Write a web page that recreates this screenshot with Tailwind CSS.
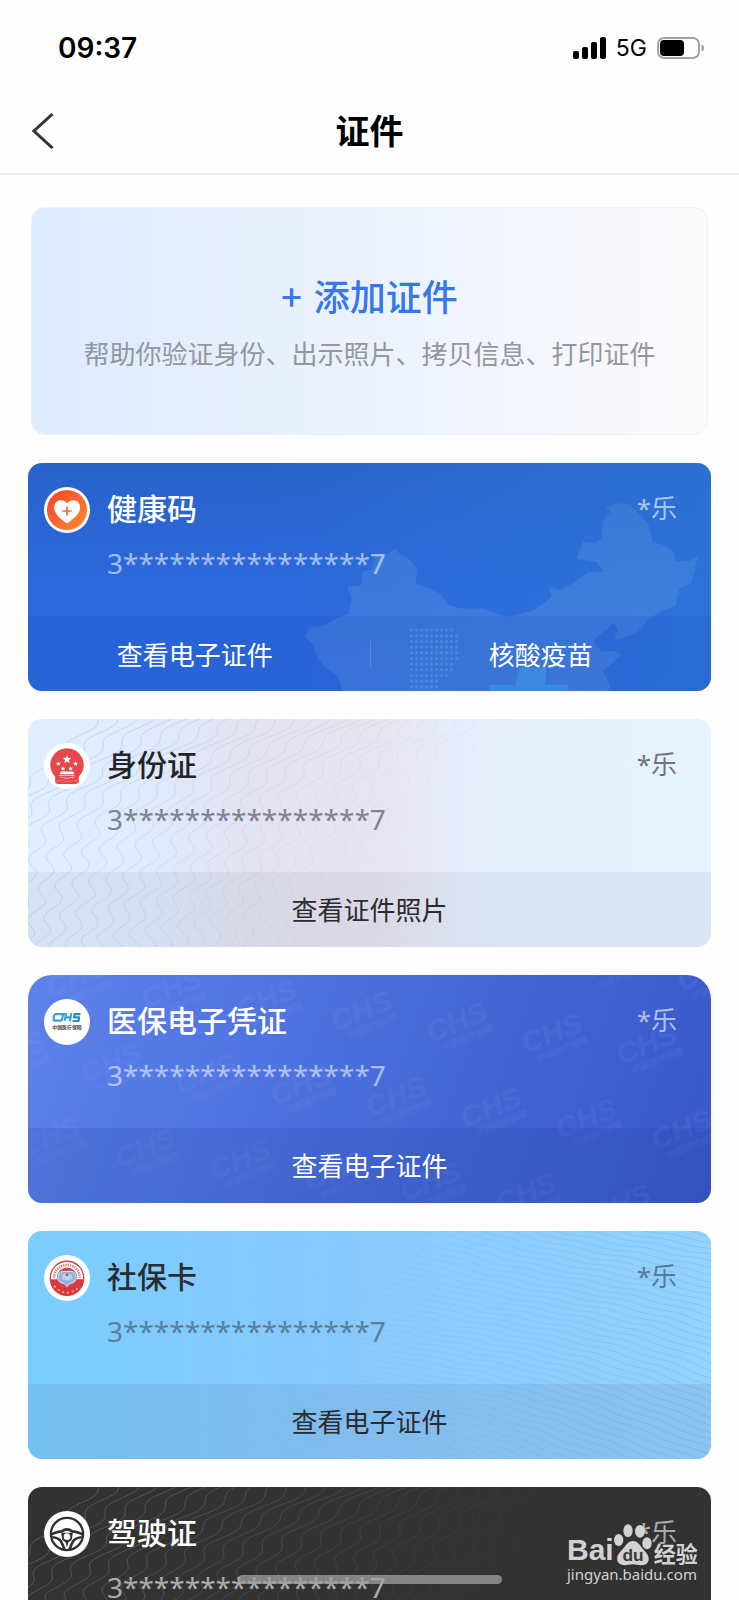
<!DOCTYPE html>
<html lang="zh-CN">
<head>
<meta charset="utf-8">
<meta name="viewport" content="width=device-width, initial-scale=1">
<title>证件</title>
<script src="https://cdn.jsdelivr.net/npm/@tailwindcss/browser@4"></script>
</head>
<body class="bg-white font-['Noto_Sans_CJK_SC',sans-serif]">
<div class="relative flex h-screen flex-col overflow-hidden bg-[#fefefe]">

  <!-- Status bar -->
  <div class="flex h-[89px] shrink-0 items-center justify-between pt-1.5 pr-[34px] pl-[58px] text-black">
    <time class="font-['Inter',sans-serif] text-[28px] leading-8 font-semibold">09:37</time>
    <div class="flex items-center gap-2.5">
      <svg class="h-[22px] w-[33px]" viewBox="0 0 33 22" aria-label="信号"><rect x="0" y="14" width="6" height="8" rx="2"/><rect x="9" y="10" width="6" height="12" rx="2"/><rect x="18" y="5" width="6" height="17" rx="2"/><rect x="27" y="0" width="6" height="22" rx="2"/></svg>
      <span class="font-['Inter',sans-serif] text-[23px] leading-8">5G</span>
      <svg class="h-[22px] w-12" viewBox="0 0 48 22" aria-label="电量"><rect x="1" y="1" width="41" height="20" rx="6" fill="none" stroke="#a3a3a3" stroke-width="2"/><rect x="3" y="3" width="24" height="16" rx="4"/><path d="M44.500 7.500c3.500.5 3.500 6.500 0 7z" fill="#a3a3a3"/></svg>
    </div>
  </div>

  <!-- Title bar -->
  <header class="grid h-[86px] shrink-0 grid-cols-[1fr_auto_1fr] items-center border-b-2 border-[#ebebeb] px-8">
    <button type="button" aria-label="返回" class="w-[22px]"><svg class="h-9 w-[22px]" viewBox="0 0 22 36" fill="none" stroke="#333" stroke-width="3"><path d="M20.500 1 1.900 18l18.600 17"/></svg></button>
    <h1 class="pb-0.5 text-[34px] leading-12 font-bold text-black">证件</h1>
    <span></span>
  </header>

  <main class="flex min-h-0 flex-1 flex-col gap-7 overflow-hidden px-7 pt-8">
    <button type="button" class="mx-[3px] flex h-[228px] shrink-0 flex-col items-center justify-center gap-4 rounded-[14px] border border-[#edf0fb] bg-linear-to-r from-[#dcebfe] via-[#ecf2fd] to-[#fcfafb]">
      <span class="text-[36px] leading-12 font-medium text-[#3478ea]"><span class="mr-1">+</span> 添加证件</span>
      <span class="text-[26px] leading-9 text-[#94979d]">帮助你验证身份、出示照片、拷贝信息、打印证件</span>
    </button>

    <!-- Health code -->
    <article class="relative isolate flex shrink-0 flex-col overflow-hidden rounded-[14px] bg-linear-to-b from-[#2962ca] via-[#2b68da] to-[#2b69e0] text-white">
      <svg class="absolute inset-0 -z-10 h-full w-full" viewBox="0 0 683 228" preserveAspectRatio="xMaxYMin slice" aria-hidden="true">
        <defs>
          <linearGradient id="hc"><stop offset=".35" stop-color="#2e78d8" stop-opacity="0"/><stop offset="1" stop-color="#2e78d8" stop-opacity=".6"/></linearGradient>
          <linearGradient id="map" x2="0" y2="1"><stop offset="0" stop-color="#6fa5e0" stop-opacity=".2"/><stop offset="1" stop-color="#6c9de4" stop-opacity=".34"/></linearGradient>
          <pattern id="dots" x="328" y="518" width="15" height="17" patternUnits="userSpaceOnUse"><circle cx="7" cy="8" r="4.500" fill="#66a8ef"/></pattern>
        </defs>
        <rect width="683" height="228" fill="url(#hc)"/>
        <g transform="translate(272 -8) scale(.333)">
          <path fill="url(#map)" d="M130 720 115 665 70 633 48 600 40 570 15 545 25 520 75 512 110 490 145 478 155 430 142 396 185 390 190 350 215 345 225 300 262 298 285 280 300 298 325 310 352 340 348 388 390 400 425 420 445 450 480 460 550 462 620 486 650 480 700 468 740 440 755 425 748 398 780 405 820 385 865 352 912 350 890 320 830 312 850 260 885 265 905 250 912 195 932 170 918 158 955 145 990 148 1025 185 1045 205 1060 262 1090 270 1122 290 1130 320 1170 318 1195 303 1185 345 1175 385 1140 400 1128 452 1085 470 1050 490 1010 535 945 555 955 520 940 508 905 535 880 560 905 590 940 588 965 600 910 650 930 690 925 720z"/>
          <path fill="url(#dots)" opacity=".65" d="M328 518h135v17h15v85h-15v34h-17v17h-30v49h-88z"/>
          <path fill="#44a0ea" opacity=".8" d="M658 640h82l-5 50h70v30H570v-30h78z"/>
        </g>
      </svg>
      <div class="box-content flex h-[129px] items-start gap-[17px] pt-6 pr-[34px] pl-4">
        <svg class="size-[46px] shrink-0" viewBox="0 0 140 140" aria-hidden="true"><defs><linearGradient id="or" x2="1" y2="1"><stop stop-color="#fa4028"/><stop offset="1" stop-color="#fb8f32"/></linearGradient></defs><circle cx="70" cy="70" r="70" fill="#fff"/><circle cx="70" cy="70" r="61" fill="url(#or)"/><path fill="#fff" d="M70 111C49 96 31 81 31 62c0-23 28-29 39-12 11-17 40-11 40 12 0 19-19 34-40 49z"/><path d="M70 59v28M56 73h28" stroke="#f0663c" stroke-width="5"/></svg>
        <div class="flex-1">
          <h2 class="text-[30px] leading-10 font-medium">健康码</h2>
          <p class="mt-[18px] font-['Noto_Sans',sans-serif] text-[28px] leading-9 text-white/55">3****************7</p>
        </div>
        <span class="font-['Noto_Sans','Noto_Sans_CJK_SC',sans-serif] text-[26px] leading-[42px] text-white/60">*乐</span>
      </div>
      <div class="grid h-[75px] grid-cols-2 bg-[#1f4fc0]/20">
        <button type="button" class="flex items-center justify-center pr-2 text-[26px] leading-9">查看电子证件</button>
        <button type="button" class="flex items-center text-[26px] leading-9"><span class="h-[26px] w-px bg-white/15"></span><span class="flex-1">核酸疫苗</span></button>
      </div>
    </article>

    <!-- ID card -->
    <article class="relative isolate flex shrink-0 flex-col overflow-hidden rounded-[14px] bg-[linear-gradient(90deg,#e0eeff_0%,#dfebfe_15%,#e4e3f3_32%,#e8e4f1_52%,#e6ebfb_62%,#e6f1fe_72%,#e6f2ff_100%)] text-[#222429]">
      <svg id="id-lines" class="absolute inset-0 -z-10 h-full w-full" viewBox="0 0 683 228" preserveAspectRatio="xMinYMin slice" fill="none" stroke="#a5bbdc" stroke-opacity=".5" aria-hidden="true"></svg>
      <div class="box-content flex h-[129px] items-start gap-[17px] pt-6 pr-[34px] pl-4">
        <svg class="size-[46px] shrink-0" viewBox="0 0 140 140" aria-hidden="true"><circle cx="70" cy="70" r="70" fill="#fff"/><path fill="#e5474c" d="M70 16a51 51 0 0 1 36 87v17q-4 5-12 5H46q-8 0-12-5v-17a51 51 0 0 1 36-87z"/><g fill="#fff"><path d="m70 37 3.500 8 9 1-6.500 6 2 9-8-4.500-8 4.500 2-9-6.500-6 9-1z"/><path id="st" d="m44 56 2 4 5 .5-3.500 3.500 1 5-4.500-2.500-4.500 2.500 1-5-3.500-3.500 5-.5z"/><use href="#st" x="52"/><use href="#st" x="14" y="15"/><use href="#st" x="37" y="15"/><path d="M51 87h38l3 8H48z"/></g><path d="M47 99h46M49 104q21 7 42 0" stroke="#f8b9bb" stroke-width="3" fill="none"/><path d="M40 122v-8q30 6 60 0v8" stroke="#f28a8d" stroke-width="2" fill="none"/></svg>
        <div class="flex-1">
          <h2 class="text-[30px] leading-10 font-medium">身份证</h2>
          <p class="mt-[18px] font-['Noto_Sans',sans-serif] text-[28px] leading-9 text-[#80828d]">3****************7</p>
        </div>
        <span class="font-['Noto_Sans','Noto_Sans_CJK_SC',sans-serif] text-[26px] leading-[42px] text-[#70747d]">*乐</span>
      </div>
      <button type="button" class="h-[75px] bg-[#1c2b3c]/6 pb-0.5 text-[26px] leading-9 text-[#2b2b2e]">查看证件照片</button>
    </article>

    <!-- Medical insurance -->
    <article class="relative isolate flex shrink-0 flex-col overflow-hidden rounded-t-3xl rounded-b-[14px] bg-[linear-gradient(110deg,#5d82ea_0%,#5176e3_28%,#4467d6_60%,#3857c8_100%)] text-white">
      <svg class="absolute inset-0 -z-10 h-full w-full" aria-hidden="true">
        <defs><pattern id="chs" width="168" height="92" patternUnits="userSpaceOnUse" patternTransform="rotate(-22)"><g fill="#8aa6ff" fill-opacity=".1" font-family="Liberation Sans, sans-serif" font-weight="700" font-style="italic"><text x="12" y="30" font-size="30">CHS</text><text x="20" y="42" font-size="9">中国医疗保障</text><text x="96" y="76" font-size="30">CHS</text><text x="104" y="88" font-size="9">中国医疗保障</text></g></pattern></defs>
        <rect width="100%" height="100%" fill="url(#chs)"/>
      </svg>
      <div class="box-content flex h-[129px] items-start gap-[17px] pt-6 pr-[34px] pl-4">
        <svg class="size-[46px] shrink-0" viewBox="0 0 140 140" aria-hidden="true"><circle cx="70" cy="70" r="70" fill="#fff"/><g fill="none" stroke="#3aa0d8" stroke-width="6.500" stroke-linejoin="round"><path d="M57 46H35q-3 0-4 4l-2 11q0 5 4 5h18q3 0 4-3l3-17M57 46h10l-4 20M66 56h14M83 43l-4 25"/><path stroke="#2f86c4" d="M111 46H93l-2 10h16l-2 11H87"/></g><text x="70" y="91" text-anchor="middle" font-size="15" font-weight="700" fill="#444" font-family="Noto Sans CJK SC, sans-serif">中国医疗保障</text></svg>
        <div class="flex-1">
          <h2 class="text-[30px] leading-10 font-medium">医保电子凭证</h2>
          <p class="mt-[18px] font-['Noto_Sans',sans-serif] text-[28px] leading-9 text-white/55">3****************7</p>
        </div>
        <span class="font-['Noto_Sans','Noto_Sans_CJK_SC',sans-serif] text-[26px] leading-[42px] text-white/60">*乐</span>
      </div>
      <button type="button" class="h-[75px] bg-[#1d3a9a]/17 pb-0.5 text-[26px] leading-9">查看电子证件</button>
    </article>

    <!-- Social security -->
    <article class="relative isolate flex shrink-0 flex-col overflow-hidden rounded-[14px] bg-linear-to-r from-[#7acdfe] via-[#89c9fd] to-[#94d2ff] text-[#2a2d31]">
      <svg id="ss-lines" class="absolute inset-0 -z-10 h-full w-full" viewBox="0 0 683 228" preserveAspectRatio="xMaxYMin slice" fill="none" stroke="url(#ssg)" aria-hidden="true"><defs><linearGradient id="ssg" gradientUnits="userSpaceOnUse" x1="0" x2="683" y1="0" y2="0"><stop offset=".2" stop-color="#5b9fe0" stop-opacity="0"/><stop offset="1" stop-color="#5b9fe0" stop-opacity=".28"/></linearGradient></defs></svg>
      <div class="box-content flex h-[129px] items-start gap-[17px] pt-6 pr-[34px] pl-4">
        <svg class="size-[46px] shrink-0" viewBox="0 0 140 140" aria-hidden="true"><circle cx="70" cy="70" r="70" fill="#fff"/><circle cx="70" cy="70" r="51" fill="#fff" stroke="#c9464c" stroke-width="4"/><path d="M31 69a39 39 0 0 1 78 0" fill="none" stroke="#d77a7e" stroke-width="8" stroke-dasharray="4 3"/><path fill="#d8383f" d="M19 74h102a51 51 0 0 1-102 0z"/><circle cx="70" cy="69" r="31" fill="#d8454b"/><path fill="#8fb5dc" stroke="#e5edf5" stroke-width="3" d="M56 50h28q14 3 14 18t-16 18l-4 1-8 9-8-9-4-1q-16-3-16-18t14-18z"/><ellipse cx="70" cy="67" rx="16" ry="11" fill="#b7d3ec"/><circle cx="70" cy="60" r="4" fill="#d8383f"/><path d="M31 94q39 42 78 0" fill="none" stroke="#f3a86b" stroke-width="6" stroke-dasharray="6 9"/></svg>
        <div class="flex-1">
          <h2 class="text-[30px] leading-10 font-medium">社保卡</h2>
          <p class="mt-[18px] font-['Noto_Sans',sans-serif] text-[28px] leading-9 text-[#5c7f98]">3****************7</p>
        </div>
        <span class="font-['Noto_Sans','Noto_Sans_CJK_SC',sans-serif] text-[26px] leading-[42px] text-[#567a92]">*乐</span>
      </div>
      <button type="button" class="h-[75px] bg-[#4a5a80]/11 pb-0.5 text-[26px] leading-9 text-[#2b2b2e]">查看电子证件</button>
    </article>

    <!-- Driving licence -->
    <article class="relative isolate flex shrink-0 flex-col overflow-hidden rounded-[14px] bg-[#323232] text-white">
      <svg id="dl-lines" class="absolute inset-0 -z-10 h-full w-full" viewBox="0 0 683 228" preserveAspectRatio="xMinYMin slice" fill="none" stroke="#6a6a6a" stroke-opacity=".7" aria-hidden="true"></svg>
      <div class="box-content flex h-[129px] items-start gap-[17px] pt-6 pr-[34px] pl-4">
        <svg class="size-[46px] shrink-0" viewBox="0 0 140 140" aria-hidden="true"><circle cx="70" cy="70" r="70" fill="#fff"/><circle cx="70" cy="70" r="49" fill="none" stroke="#303030" stroke-width="7"/><path d="M23 71q20-9 31-9 8-6 16-6t16 6q11 0 31 9M25 80q19 1 27 13 7 12 10 24M115 80q-19 1-27 13-7 12-10 24" fill="none" stroke="#303030" stroke-width="8"/><path d="M52 66h36l-4 22-10 8-4 14-4-14-10-8z" fill="#303030"/><circle cx="70" cy="78" r="10" fill="#fff"/></svg>
        <div class="flex-1">
          <h2 class="text-[30px] leading-10 font-medium">驾驶证</h2>
          <p class="mt-[18px] font-['Noto_Sans',sans-serif] text-[28px] leading-9 text-white/60">3****************7</p>
        </div>
        <span class="font-['Noto_Sans','Noto_Sans_CJK_SC',sans-serif] text-[26px] leading-[42px] text-white/60">*乐</span>
      </div>
      <button type="button" class="h-[75px] bg-white/5 pb-0.5 text-[26px] leading-9">查看电子证件</button>
    </article>
  </main>

  <!-- Home indicator -->
  <div class="absolute bottom-4 left-1/2 h-[9px] w-[264px] -translate-x-1/2 rounded-full bg-[#a0a0a0]/75"></div>

  <!-- Watermark -->
  <div class="absolute right-10 bottom-[18px] flex w-[132px] flex-col text-[#d2d2d2]">
    <div class="flex items-end">
      <span class="font-['Liberation_Sans',sans-serif] text-[30px] leading-8 font-bold">Bai</span>
      <svg class="h-[42px] w-[38px] shrink-0" viewBox="0 0 114 126" fill="currentColor" aria-hidden="true"><ellipse cx="14" cy="48" rx="14" ry="18"/><ellipse cx="42" cy="20" rx="14" ry="19"/><ellipse cx="78" cy="22" rx="15" ry="19"/><ellipse cx="99" cy="58" rx="14" ry="18"/><path d="M57 51c18 0 22 18 37 32 17 17 13 41-12 41-10 0-16-3-25-3s-16 3-25 3c-26 0-29-26-12-42 15-14 19-31 37-31z"/><text x="57" y="112" text-anchor="middle" font-family="Liberation Sans, sans-serif" font-size="52" fill="#3a3a3a" font-weight="700">du</text></svg>
      <span class="ml-0.5 text-[22px] leading-7 font-bold">经验</span>
    </div>
    <span class="font-['Noto_Sans',sans-serif] text-[15px] leading-4">jingyan.baidu.com</span>
  </div>
</div>

<script>
  // Security-print line work for the card backgrounds.
  function draw(id, count, path, fade) {
    var svg = document.getElementById(id);
    for (var i = 0; i < count; i++) {
      var p = document.createElementNS('http://www.w3.org/2000/svg', 'path');
      p.setAttribute('d', path(i));
      p.setAttribute('opacity', fade(i));
      svg.appendChild(p);
    }
  }
  // Roughly vertical waves that bend right toward the top.
  function waves(gap) {
    return function (i) {
      var d = '';
      for (var y = -4; y <= 232; y += 2) {
        var t = y / 228;
        var x = -80 + i * gap + 150 * (1 - t) * (1 - t) + 6 * Math.sin(y / 5 + i * 0.5) + 6 * Math.sin(y / 25 + i / 6);
        d += (d ? 'L' : 'M') + x.toFixed(1) + ' ' + y;
      }
      return d;
    };
  }
  // Shallow diagonal ripples.
  function ripples(gap, slope) {
    return function (i) {
      var d = '';
      for (var x = 0; x <= 690; x += 6) {
        var y = -190 + i * gap + x * slope + Math.sin(x / 9 + i) + 7 * Math.sin(x / 70 + i / 8);
        d += (d ? 'L' : 'M') + x + ' ' + y.toFixed(1);
      }
      return d;
    };
  }
  draw('id-lines', 30, waves(16), function (i) { return Math.max(0, 1 - i / 30); });
  draw('ss-lines', 60, ripples(7, 0.28), function () { return 1; });
  draw('dl-lines', 30, waves(17), function (i) { return Math.max(0, 1 - i / 30); });
</script>
</body>
</html>
